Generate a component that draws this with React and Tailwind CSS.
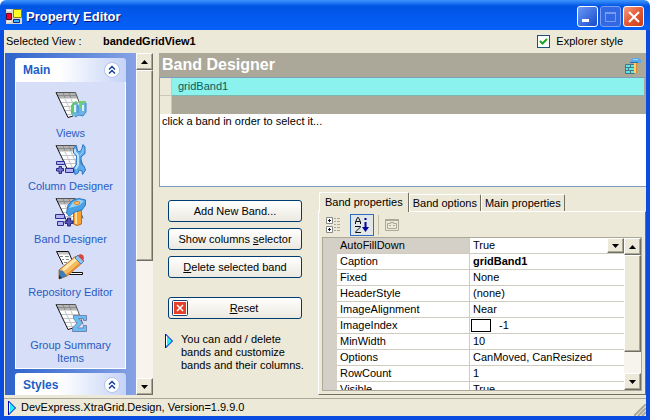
import { useState } from 'react';

const navItems = [
  { label: 'Views', icon: ViewsIcon },
  { label: 'Column Designer', icon: ColumnIcon },
  { label: 'Band Designer', icon: BandIcon },
  { label: 'Repository Editor', icon: RepositoryIcon },
  { label: 'Group Summary Items', icon: SummaryIcon },
];

const properties = [
  { name: 'Caption', value: 'gridBand1', bold: true },
  { name: 'Fixed', value: 'None' },
  { name: 'HeaderStyle', value: '(none)' },
  { name: 'ImageAlignment', value: 'Near' },
  { name: 'ImageIndex', value: '-1', swatch: true },
  { name: 'MinWidth', value: '10' },
  { name: 'Options', value: 'CanMoved, CanResized' },
  { name: 'RowCount', value: '1' },
  { name: 'Visible', value: 'True' },
];

const tabs = ['Band properties', 'Band options', 'Main properties'];

const raised =
  'border border-t-white border-l-white border-r-[#716f64] border-b-[#716f64] bg-[#ece9d8] shadow-[inset_-1px_-1px_0_#aca899]';

// tilted sheet shared by the navigation icons
function Sheet() {
  return (
    <g>
      <path d="M1 1.500H20.500L28 21.500L13 26.500Z" fill="#fff" />
      <path
        d="M6 11.500H24M8 15.500H26M10 19.500H27M12 23.500H23M10 8L18 25M16 8L23 23"
        fill="none"
        stroke="#c4c4c8"
      />
      <path d="M1 1.500H20.500L23 7.500H4Z" fill="#b4b4b4" />
      <path d="M2 4.500H21M8 2L10 7M14 2L16 7" fill="none" stroke="#8c8c8c" />
      <path d="M1 1.500H20.500L28 21.500" fill="none" stroke="#555" />
      <path d="M1 1.500L13 26.500L18 25" fill="none" stroke="#111" />
    </g>
  );
}

function ViewsIcon() {
  return (
    <svg className="h-8 w-8" viewBox="0 0 32 32" aria-hidden="true">
      <Sheet />
      <path d="M16 15L18 12L21 11L23 12L24 16L25 11L31 10.500V21L28 25L23 24L20 26L17 24Z" fill="#6db4e4" />
      <path d="M17 23V15L19 12L22 11" fill="none" stroke="#5fc860" strokeWidth="2" />
      <path d="M25 17V11H31" fill="none" stroke="#6fd070" strokeWidth="2" />
      <path d="M20 14V21M28 14V20" stroke="#d4f4f6" strokeWidth="2" />
      <path d="M23 14V22M31 12V21L28 25L24 24L20 26" fill="none" stroke="#3d86cc" />
    </svg>
  );
}

function ColumnIcon() {
  return (
    <svg className="h-8 w-8" viewBox="0 0 32 32" aria-hidden="true">
      <Sheet />
      <path
        d="M21.500 1.500L18.500 4V9L21.500 12L21 21L18.500 24L20 30.500L23 29L24 26L27 27L27.500 30.500L30.500 26L29 22L26 20V13L30 9.500V3L28 .500L26.500 6L24 8L22 6Z"
        fill="#5cacec"
        stroke="#2c74c4"
      />
      <path d="M20 5V8L23 11V21L20.500 25" fill="none" stroke="#b9e2fc" strokeWidth="2" />
      <path d="M28 4V8L25 11" fill="none" stroke="#9ad2fa" />
      <path d="M1.500 17.500H9.500V20.500H1.500ZM10.500 24.500H18.500V28.500H10.500Z" fill="#b4b0f4" stroke="#303090" />
      <path d="M1.500 24.500H4V22.500H6.500V24.500H8.500V27H6.500V29.500H4V27H1.500Z" fill="#7774da" stroke="#282880" />
    </svg>
  );
}

function BandIcon() {
  return (
    <svg className="h-8 w-8" viewBox="0 0 32 32" aria-hidden="true">
      <Sheet />
      <path d="M18.500 15L26.500 13V27L22 28.500L18.500 27Z" fill="#f8a030" stroke="#b87020" />
      <path d="M21 15V27" stroke="#ffe0a0" strokeWidth="2" />
      <path d="M11.500 16L13 8L18 3L24 1.500L30.500 3V8L27 13L20 15L14 19Z" fill="#4aa0e4" stroke="#2c7cc0" />
      <path d="M14 11L18 5L24 2.500L29 4L25 8L18 10Z" fill="#98d4fa" />
      <ellipse cx="22" cy="6" rx="3" ry="1.500" fill="#ffc36d" stroke="#c98638" />
      <path d="M0.500 17.500H9.500V21.500H0.500ZM2.500 24.500H8.500V28.500H2.500Z" fill="#b4b0f4" stroke="#303090" />
      <path d="M10 24H12.500V21H15.500V24H18V26.500H15.500V29H12.500V26.500H10Z" fill="#5553bd" stroke="#282880" />
    </svg>
  );
}

function RepositoryIcon() {
  return (
    <svg className="h-8 w-8" viewBox="0 0 32 32" aria-hidden="true">
      <path d="M1.500 1.500H13.500L18.500 12L8.500 14.500Z" fill="#fff" />
      <path d="M1.500 1.500H13.500L15 4.500H3Z" fill="#c4c4c4" />
      <path d="M5 6.500H8M10 6.500H14M7 9.500H9M11 9.500H14M9 12.500H12" stroke="#888" />
      <path d="M1.500 1.500L8 14.500M1.500 1.500H13.500L17 10" fill="none" stroke="#111" />
      <path d="M14 22.500H27.500V24.500H12" fill="#fff" stroke="#111" />
      <path d="M4 20L21 6L28 12L12 26L4 29Z" fill="#f8bc60" stroke="#a87030" />
      <path d="M8 20L22 8" stroke="#ffe7ad" strokeWidth="3" />
      <path d="M11 26L26 13" stroke="#e09038" strokeWidth="2" />
      <path d="M20 8L23 5L29 11L26 14Z" fill="#8cc4f0" stroke="#4a84c0" />
      <path d="M23 6L25 4L28 5L29 8L28 11Z" fill="#d04840" />
      <path d="M4 20L8 21L12 26L4 29Z" fill="#3c7cb8" />
      <path d="M4 25L7 28L4 29Z" fill="#102c60" />
    </svg>
  );
}

function SummaryIcon() {
  return (
    <svg className="h-8 w-8" viewBox="0 0 32 32" aria-hidden="true">
      <Sheet />
      <path
        d="M18.500 12.500H31.500V17.500H28.500V15.500H23.500L27.500 20L22.500 25H28.500V22.500H31.500V28.500H17.500V25.500L22 20L18.500 15.500Z"
        fill="#66c0f4"
        stroke="#7880b0"
      />
    </svg>
  );
}

function Arrow({ up }) {
  return (
    <svg className="h-1 w-[7px]" viewBox="0 0 7 4" aria-hidden="true">
      <path d={up ? 'M0 4L3.5 0L7 4Z' : 'M0 0H7L3.5 4Z'} fill="#000" />
    </svg>
  );
}

function Scrollbar({ thumb }) {
  return (
    <div className="flex w-[17px] shrink-0 flex-col bg-[#f6f4ec]">
      <button aria-label="Scroll up" className={`flex h-[17px] shrink-0 items-center justify-center ${raised}`}>
        <Arrow up />
      </button>
      <div className="min-h-0 flex-1">
        <div className={`${thumb} ${raised}`} />
      </div>
      <button aria-label="Scroll down" className={`flex h-[17px] shrink-0 items-center justify-center ${raised}`}>
        <Arrow />
      </button>
    </div>
  );
}

function Pointer() {
  return (
    <svg className="h-4 w-[10px] shrink-0" viewBox="0 0 10 16" aria-hidden="true">
      <path d="M1.500 1V15L8.500 8Z" fill="#28eaf4" stroke="#0000c0" />
      <path d="M2.500 3V12" stroke="#fff" />
    </svg>
  );
}

function GroupHeader({ title, onClick }) {
  return (
    <button
      onClick={onClick}
      className="flex h-6 w-full shrink-0 items-center justify-between rounded-t-[3px] bg-linear-to-r from-white from-40% to-[#c6d3f7] pr-[6px] pl-2 text-[12px] font-bold text-[#215dc6]"
    >
      {title}
      <svg className="h-4 w-4" viewBox="0 0 16 16" fill="none" aria-hidden="true">
        <circle cx="8" cy="8" r="7.500" fill="#fff" stroke="#b3c3e7" />
        <path d="M5 7.500L8 4.500L11 7.500M5 11.500L8 8.500L11 11.500" stroke="#143f9c" strokeWidth="1.500" />
      </svg>
    </button>
  );
}

function Sidebar() {
  const [open, setOpen] = useState(true);
  return (
    <aside className="flex w-[148px] shrink-0">
      <nav className="flex min-w-0 flex-1 flex-col gap-1 overflow-hidden bg-linear-to-r from-[#3165cd] from-5% to-[#86a3e4] px-[10px] pt-[5px]">
        <div className="shrink-0">
          <GroupHeader title="Main" onClick={() => setOpen(!open)} />
          {open && (
            <div className="flex flex-col gap-1 border border-t-0 border-white bg-[#d6dff7] px-3 pt-[9px] pb-[3px]">
              {navItems.map(({ label, icon: Icon }) => (
                <button key={label} className="-mx-2 flex flex-col items-center gap-1 px-2 leading-[13px] text-[#295bc4]">
                  <Icon />
                  {label}
                </button>
              ))}
            </div>
          )}
        </div>
        <GroupHeader title="Styles" />
      </nav>
      <Scrollbar thumb="h-[62%]" />
    </aside>
  );
}

function TitleBar() {
  const control = 'flex h-[21px] w-[21px] items-center justify-center rounded-[3px] border';
  return (
    <header className="flex h-[30px] shrink-0 items-center rounded-t-md bg-linear-to-b from-[#3d95ff] via-[#0054e3] via-20% to-[#0661fa] px-[6px] pt-[3px]">
      <svg className="h-4 w-4 shrink-0" viewBox="0 0 16 16" aria-hidden="true">
        <path d="M0 0H16V15H0Z" fill="#d9d6cc" />
        <path d="M0.500 4.500H5.500V10.500H0.500Z" fill="#f00030" stroke="#600030" />
        <path d="M7.500 0.500H15.500V8.500H7.500Z" fill="#ffff28" stroke="#938000" />
        <path d="M7.500 10.500H13.500V13.500H7.500Z" fill="#35b8ff" stroke="#1020a0" />
        <path d="M1 1.500H5M1 12.500H5" stroke="#fff" />
      </svg>
      <h1 className="ml-1 flex-1 text-[13px] font-bold text-white [text-shadow:1px_1px_#0a1883]">Property Editor</h1>
      <div className="flex gap-[2px]">
        <button aria-label="Minimize" className={`${control} border-white bg-linear-to-br from-[#6c99f4] to-[#1748cc]`}>
          <svg className="h-4 w-4" viewBox="0 0 16 16" aria-hidden="true">
            <path d="M2 10H9V13H2Z" fill="#fff" />
          </svg>
        </button>
        <button aria-label="Maximize" disabled className={`${control} border-[#7e9eee] bg-[#3268e4]`}>
          <svg className="h-4 w-4" viewBox="0 0 16 16" fill="none" stroke="#789cf0" aria-hidden="true">
            <path d="M2.500 3.500H12.500V12.500H2.500Z" />
            <path d="M2 4H13" strokeWidth="2" />
          </svg>
        </button>
        <button aria-label="Close" className={`${control} border-white bg-linear-to-br from-[#f09a80] via-[#e45a34] to-[#c83c14]`}>
          <svg className="h-4 w-4" viewBox="0 0 16 16" stroke="#fff" strokeWidth="2" aria-hidden="true">
            <path d="M3 3L13 13M13 3L3 13" />
          </svg>
        </button>
      </div>
    </header>
  );
}

function BandDesigner() {
  return (
    <section className="flex flex-col">
      <div className="flex h-6 items-center justify-between bg-[#aca899] pr-1 pl-[3px]">
        <h2 className="text-[16px] font-bold text-white">Band Designer</h2>
        <svg className="h-[17px] w-[17px]" viewBox="0 0 17 17" aria-hidden="true">
          <path d="M0.500 7.500H9.500V16.500H0.500Z" fill="#58e8ee" stroke="#45787c" />
          <path d="M1 10.500H9M1 13.500H9M5.500 8V10M3.500 11V13M5.500 14V16" stroke="#45787c" />
          <path d="M9 5H12V16H9Z" fill="#ffd27a" />
          <path d="M11.500 5V16" stroke="#d88c2c" />
          <path d="M5 4L8 1H14L16 3V6H14L13 5H6Z" fill="#57a9ec" />
          <path d="M5 5.500H13" stroke="#286aae" />
          <path d="M8 2.500H13" stroke="#a4d8f8" />
        </svg>
      </div>
      <div className="min-h-[110px] border border-r-0 border-[#7f9db9] bg-white">
        <div className="flex h-[18px]">
          <div className="w-3 border-r border-b border-[#cbc7b8] bg-[#ece9d8]" />
          <button className="flex-1 border-b border-[#7bb8b0] bg-[#8bf2ee] pl-[6px] text-left text-[#0b5c5c]">
            gridBand1
          </button>
          <div className="w-[2px] bg-[#aca899]" />
        </div>
        <div className="flex h-[18px]">
          <div className="w-3 border-r border-[#cbc7b8] bg-[#ece9d8]" />
          <div className="flex-1 bg-[#aca899]" />
        </div>
        <p className="px-[2px] leading-[15px]">click a band in order to select it...</p>
      </div>
    </section>
  );
}

function Actions() {
  const action =
    'relative h-[22px] rounded-[3px] border border-[#003c74] bg-linear-to-b from-white to-[#ece9e0] text-center';
  return (
    <div className="flex w-[159px] shrink-0 flex-col gap-[6px] pt-[13px] pr-4 pl-[9px]">
      <button className={action}>Add New Band...</button>
      <button className={action}>
        Show columns <u>s</u>elector
      </button>
      <button className={action}>
        <u>D</u>elete selected band
      </button>
      <button className={`${action} mt-[13px] pl-[18px]`}>
        <svg className="absolute top-[2px] left-[3px] h-4 w-4" viewBox="0 0 16 16" aria-hidden="true">
          <rect x="0.500" y="0.500" width="15" height="15" rx="1" fill="#fff" stroke="#173f73" />
          <path d="M2 2H14V14H2Z" fill="#e6402b" />
          <path d="M5 5L11 11M11 5L5 11" stroke="#fff" strokeWidth="1.500" />
        </svg>
        <u>R</u>eset
      </button>
      <div className="-mx-1 mt-2 flex gap-[7px] whitespace-nowrap">
        <Pointer />
        <p className="leading-[13px]">
          You can add / delete
          <br />
          bands and customize
          <br />
          bands and their columns.
        </p>
      </div>
    </div>
  );
}

function PropertyTabs() {
  const [tab, setTab] = useState(0);
  const [autoFill, setAutoFill] = useState('True');
  const cell = 'h-4 border-b border-[#d0cdc0] p-0 align-middle leading-[15px]';

  return (
    <section className="flex min-h-0 min-w-0 flex-1 flex-col pt-[5px]">
      <div role="tablist" className="flex h-[19px] shrink-0 items-end pl-[1px]">
        {tabs.map((name, i) => (
          <button
            key={name}
            role="tab"
            aria-selected={tab === i}
            onClick={() => setTab(i)}
            className={`rounded-t-[2px] border border-b-0 border-t-white border-r-[#716f64] border-l-white bg-[#ece9d8] ${
              tab === i ? 'relative -mb-px h-5 px-[5px]' : 'h-[17px] px-[3px]'
            }`}
          >
            {name}
          </button>
        ))}
      </div>
      <div className="flex min-h-0 flex-1 flex-col border border-t-white border-r-[#716f64] border-b-[#716f64] border-l-white px-[3px] pb-[3px]">
        <div className="flex h-[25px] shrink-0 items-center gap-1 pl-1">
          <button aria-label="Categorized" className="flex w-5 items-center">
            <svg className="h-4 w-4" viewBox="0 0 16 16" fill="none" stroke="#888" aria-hidden="true">
              <path d="M0.500 0.500H6.500V6.500H0.500ZM0.500 9.500H6.500V15.500H0.500Z" fill="#fff" />
              <path d="M2 3.500H5M3.500 2V5M2 12.500H5M3.500 11V14" stroke="#111" />
              <path
                d="M8 1.500H10M11 1.500H14M8 4.500H10M11 4.500H14M8 7.500H10M11 7.500H14M8 10.500H10M11 10.500H14M8 13.500H10M11 13.500H14"
                stroke="#aca899"
              />
            </svg>
          </button>
          <button
            aria-label="Alphabetical"
            className="flex h-[22px] w-6 items-center justify-center border border-[#316ac5] bg-[#e1e6e8]"
          >
            <svg className="h-4 w-4" viewBox="0 0 16 16" fill="none" stroke="#111" aria-hidden="true">
              <path d="M1.500 7V5L3.500 0.500H4.500L6.500 5V7M2 4.500H6M1 9.500H6.500V10L1.500 15V15.500H7" />
              <path d="M11.500 1V3M11.500 5V12" stroke="#0000a0" strokeWidth="2" />
              <path d="M8 10H15L11.500 15Z" fill="#0000a0" stroke="none" />
            </svg>
          </button>
          <button
            aria-label="Property pages"
            disabled
            className="flex h-5 items-center border-l border-[#c2bfad] pl-[6px]"
          >
            <svg className="h-4 w-4" viewBox="0 0 16 16" fill="none" stroke="#aca899" aria-hidden="true">
              <path d="M0.500 2.500H13.500V13.500H0.500Z" />
              <path d="M1 3.500H13" />
              <path d="M2.500 6.500H5.500V5.500H8.500V6.500H11.500V11.500H2.500Z" />
              <path d="M4 8.500H6M8 8.500H10" />
            </svg>
          </button>
        </div>
        <div className="flex min-h-0 flex-1 border border-[#aca899] bg-white">
          <div className="min-w-0 flex-1 overflow-hidden">
            <table className="w-full table-fixed border-separate border-spacing-0 text-left">
              <colgroup>
                <col className="w-[14px]" />
                <col className="w-[133px]" />
                <col />
              </colgroup>
              <tbody>
                <tr>
                  <td className={`${cell} border-[#d4d0c8] bg-[#d4d0c8]`} />
                  <th scope="row" className={`${cell} border-r bg-[#d4d0c8] font-normal`}>
                    <label htmlFor="autofill" className="pl-[3px]">
                      AutoFillDown
                    </label>
                  </th>
                  <td className={cell}>
                    <div className="flex h-[15px]">
                      <select
                        id="autofill"
                        value={autoFill}
                        onChange={(e) => setAutoFill(e.target.value)}
                        className="min-w-0 flex-1 appearance-none pl-[3px] outline-none"
                      >
                        <option>True</option>
                        <option>False</option>
                      </select>
                      <span className={`flex w-[17px] items-center justify-center ${raised}`}>
                        <Arrow />
                      </span>
                    </div>
                  </td>
                </tr>
                {properties.map((p) => (
                  <tr key={p.name}>
                    <td className={`${cell} border-[#d4d0c8] bg-[#d4d0c8]`} />
                    <th scope="row" className={`${cell} border-r font-normal`}>
                      <span className="pl-[3px]">{p.name}</span>
                    </th>
                    <td className={cell}>
                      <div className={`flex h-[15px] items-center ${p.swatch ? 'gap-2 pl-[1px]' : 'pl-[3px]'}`}>
                        {p.swatch && <span className="h-[13px] w-5 border border-black" />}
                        <span className={p.bold ? 'font-bold' : ''}>{p.value}</span>
                      </div>
                    </td>
                  </tr>
                ))}
              </tbody>
            </table>
          </div>
          <Scrollbar thumb="h-[82%]" />
        </div>
      </div>
    </section>
  );
}

export default function App() {
  const [explorer, setExplorer] = useState(true);

  return (
    <div className="flex h-screen flex-col overflow-hidden bg-white font-['Liberation_Sans',sans-serif] text-[11px] text-black">
      <TitleBar />
      <div className="flex min-h-0 flex-1 flex-col border-4 border-t-0 border-[#0a4be0] bg-[#ece9d8]">
        <div className="flex h-[23px] shrink-0 items-center pr-[23px] pl-[2px]">
          <span className="w-[97px]">Selected View :</span>
          <span className="flex-1 font-bold">bandedGridView1</span>
          <label className="flex items-center gap-[6px]">
            <span className="grid h-[13px] w-[13px]">
              <input
                type="checkbox"
                checked={explorer}
                onChange={(e) => setExplorer(e.target.checked)}
                className="peer col-start-1 row-start-1 h-[13px] w-[13px] appearance-none border border-[#1c5180] bg-white"
              />
              <svg
                className="pointer-events-none col-start-1 row-start-1 hidden h-[13px] w-[13px] peer-checked:block"
                viewBox="0 0 13 13"
                fill="none"
                stroke="#21a121"
                strokeWidth="2"
                aria-hidden="true"
              >
                <path d="M3 6L5.500 8.500L10 4" />
              </svg>
            </span>
            Explorer style
          </label>
        </div>

        <main className="flex min-h-0 flex-1 gap-[6px] pl-[1px]">
          <Sidebar />
          <div className="flex min-h-0 min-w-0 flex-1 flex-col">
            <BandDesigner />
            <div className="flex min-h-0 flex-1">
              <Actions />
              <PropertyTabs />
            </div>
          </div>
        </main>

        <footer className="mt-[3px] flex h-[18px] shrink-0 items-center border-t border-[#aca899] pl-[3px]">
          <Pointer />
          <span className="ml-1 flex-1">DevExpress.XtraGrid.Design, Version=1.9.9.0</span>
          <svg className="h-3 w-3 self-end" viewBox="0 0 12 12" stroke="#aca899" aria-hidden="true">
            <path d="M0 12L12 0M4 12L12 4M8 12L12 8" strokeWidth="2" />
          </svg>
        </footer>
      </div>
    </div>
  );
}
